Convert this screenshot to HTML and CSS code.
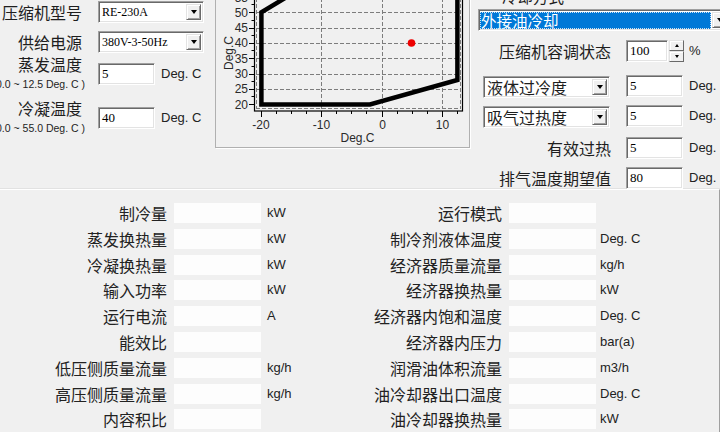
FILE: index.html
```html
<!DOCTYPE html>
<html>
<head>
<meta charset="utf-8">
<link rel="stylesheet" href="styles.css">
</head>
<body>
<div class="window">
  <div class="top">
    <div class="leftcol">
      <div class="row r1">
        <div class="lbl"><span class="cap">压缩机型号</span></div>
        <div class="combo w106"><span class="val serif">RE-230A</span><span class="dd"></span></div>
      </div>
      <div class="row r2">
        <div class="lbl"><span class="cap">供给电源</span></div>
        <div class="combo w106"><span class="val serif">380V-3-50Hz</span><span class="dd"></span></div>
      </div>
      <div class="row r3">
        <div class="lbl">
          <span class="cap">蒸发温度</span>
          <span class="range"><span>(-10.0 ~ 12.5 Deg. C )</span></span>
        </div>
        <div class="inp in3">5</div>
        <span class="unit in3">Deg. C</span>
      </div>
      <div class="row r4">
        <div class="lbl">
          <span class="cap">冷凝温度</span>
          <span class="range"><span>(20.0 ~ 55.0 Deg. C )</span></span>
        </div>
        <div class="inp in4">40</div>
        <span class="unit in4">Deg. C</span>
      </div>
    </div>

    <div class="chartpanel">
      <svg class="chart" width="253" height="156" viewBox="0 0 253 156">
        <g transform="translate(-216 9)">
          <g stroke="#7c7c7c" stroke-width="1" stroke-dasharray="4 2" fill="none">
            <line x1="256" y1="89.5" x2="461" y2="89.5"/>
            <line x1="256" y1="74.5" x2="461" y2="74.5"/>
            <line x1="256" y1="58.5" x2="461" y2="58.5"/>
            <line x1="256" y1="43.5" x2="461" y2="43.5"/>
            <line x1="256" y1="28.5" x2="461" y2="28.5"/>
            <line x1="256" y1="12.5" x2="461" y2="12.5"/>
            <line x1="256" y1="-2.5" x2="461" y2="-2.5"/>
            <line x1="321.5" y1="-20" x2="321.5" y2="109"/>
            <line x1="382.5" y1="-20" x2="382.5" y2="109"/>
            <line x1="442.5" y1="-20" x2="442.5" y2="109"/>
            <line x1="256.5" y1="-20" x2="256.5" y2="109"/>
            <line x1="256" y1="108.5" x2="461" y2="108.5"/>
            <line x1="460.5" y1="-20" x2="460.5" y2="109"/>
          </g>
          <rect x="254.5" y="-20" width="208" height="131" fill="none" stroke="#000" stroke-width="1.2"/>
          <g stroke="#000" stroke-width="1">
            <line x1="249" y1="104.5" x2="254" y2="104.5"/>
            <line x1="249" y1="89.5" x2="254" y2="89.5"/>
            <line x1="249" y1="74.5" x2="254" y2="74.5"/>
            <line x1="249" y1="58.5" x2="254" y2="58.5"/>
            <line x1="249" y1="43.5" x2="254" y2="43.5"/>
            <line x1="249" y1="28.5" x2="254" y2="28.5"/>
            <line x1="249" y1="12.5" x2="254" y2="12.5"/>
            <line x1="249" y1="-2.5" x2="254" y2="-2.5"/>
            <line x1="251.5" y1="96.5" x2="254" y2="96.5"/>
            <line x1="251.5" y1="81.5" x2="254" y2="81.5"/>
            <line x1="251.5" y1="66.5" x2="254" y2="66.5"/>
            <line x1="251.5" y1="50.5" x2="254" y2="50.5"/>
            <line x1="251.5" y1="35.5" x2="254" y2="35.5"/>
            <line x1="251.5" y1="20.5" x2="254" y2="20.5"/>
            <line x1="251.5" y1="4.5" x2="254" y2="4.5"/>
            <line x1="261.5" y1="111" x2="261.5" y2="117"/>
            <line x1="321.5" y1="111" x2="321.5" y2="117"/>
            <line x1="382.5" y1="111" x2="382.5" y2="117"/>
            <line x1="442.5" y1="111" x2="442.5" y2="117"/>
            <line x1="276.5" y1="111" x2="276.5" y2="114"/>
            <line x1="291.5" y1="111" x2="291.5" y2="114"/>
            <line x1="306.5" y1="111" x2="306.5" y2="114"/>
            <line x1="336.5" y1="111" x2="336.5" y2="114"/>
            <line x1="351.5" y1="111" x2="351.5" y2="114"/>
            <line x1="366.5" y1="111" x2="366.5" y2="114"/>
            <line x1="397.5" y1="111" x2="397.5" y2="114"/>
            <line x1="412.5" y1="111" x2="412.5" y2="114"/>
            <line x1="427.5" y1="111" x2="427.5" y2="114"/>
            <line x1="457.5" y1="111" x2="457.5" y2="114"/>
          </g>
          <polygon points="261.4,104.4 261.4,12.3 300,-11 320,-40 457.4,-40 457.4,80 370,104.4" fill="none" stroke="#000" stroke-width="4.5" stroke-linejoin="miter"/>
          <circle cx="411.5" cy="43" r="3.8" fill="#ee0000"/>
          <g class="ticklbl" text-anchor="end">
            <text x="248" y="1.5">55</text>
            <text x="248" y="16.6">50</text>
            <text x="248" y="32">45</text>
            <text x="248" y="47.3">40</text>
            <text x="248" y="62.7">35</text>
            <text x="248" y="78">30</text>
            <text x="248" y="93.4">25</text>
            <text x="248" y="108.7">20</text>
          </g>
          <g class="ticklbl" text-anchor="middle">
            <text x="261" y="128.5">-20</text>
            <text x="321.5" y="128.5">-10</text>
            <text x="382.5" y="128.5">0</text>
            <text x="442.5" y="128.5">10</text>
            <text x="357.5" y="141.5">Deg.C</text>
            <text transform="translate(232.5 53) rotate(-90)">Deg.C</text>
          </g>
        </g>
      </svg>
    </div>

    <div class="rightcol">
      <div class="cut">冷却方式</div>
      <div class="bluecombo">
        <div class="sel">外接油冷却</div>
        <span class="dd"></span>
      </div>
      <div class="rrow s1">
        <div class="rlbl">压缩机容调状态</div>
        <div class="inp w42">100</div>
        <div class="spin"><span class="sb up"></span><span class="sb down"></span></div>
        <span class="unit pct">%</span>
      </div>
      <div class="rrow s2">
        <div class="rcombo"><span class="cval">液体过冷度</span><span class="dd"></span></div>
        <div class="inp">5</div>
        <span class="unit">Deg. C</span>
      </div>
      <div class="rrow s3">
        <div class="rcombo"><span class="cval">吸气过热度</span><span class="dd"></span></div>
        <div class="inp">5</div>
        <span class="unit">Deg. C</span>
      </div>
      <div class="rrow s4">
        <div class="rlbl">有效过热</div>
        <div class="inp">5</div>
        <span class="unit">Deg. C</span>
      </div>
      <div class="rrow s5">
        <div class="rlbl">排气温度期望值</div>
        <div class="inp">80</div>
        <span class="unit">Deg. C</span>
      </div>
    </div>
  </div>

  <div class="results">
    <div class="rl">制冷量</div><div class="rf"></div><div class="ru">kW</div>
    <div class="rl">运行模式</div><div class="rf"></div><div class="ru r"></div>

    <div class="rl">蒸发换热量</div><div class="rf"></div><div class="ru">kW</div>
    <div class="rl">制冷剂液体温度</div><div class="rf"></div><div class="ru r">Deg. C</div>

    <div class="rl">冷凝换热量</div><div class="rf"></div><div class="ru">kW</div>
    <div class="rl">经济器质量流量</div><div class="rf"></div><div class="ru r">kg/h</div>

    <div class="rl">输入功率</div><div class="rf"></div><div class="ru">kW</div>
    <div class="rl">经济器换热量</div><div class="rf"></div><div class="ru r">kW</div>

    <div class="rl">运行电流</div><div class="rf"></div><div class="ru">A</div>
    <div class="rl">经济器内饱和温度</div><div class="rf"></div><div class="ru r">Deg. C</div>

    <div class="rl">能效比</div><div class="rf"></div><div class="ru"></div>
    <div class="rl">经济器内压力</div><div class="rf"></div><div class="ru r">bar(a)</div>

    <div class="rl">低压侧质量流量</div><div class="rf"></div><div class="ru">kg/h</div>
    <div class="rl">润滑油体积流量</div><div class="rf"></div><div class="ru r">m3/h</div>

    <div class="rl">高压侧质量流量</div><div class="rf"></div><div class="ru">kg/h</div>
    <div class="rl">油冷却器出口温度</div><div class="rf"></div><div class="ru r">Deg. C</div>

    <div class="rl">内容积比</div><div class="rf"></div><div class="ru"></div>
    <div class="rl">油冷却器换热量</div><div class="rf"></div><div class="ru r">kW</div>
  </div>
</div>
</body>
</html>
```

FILE: styles.css
```css
html, body {
  margin: 0;
  padding: 0;
}
body {
  background: #f0f0f0;
  color: #1e1e1e;
  font-family: "Noto Sans CJK SC", "Noto Sans", sans-serif;
  font-size: 16px;
  overflow: hidden;
}
.window {
  width: 720px;
  height: 432px;
  overflow: hidden;
  position: relative;
}
.top {
  display: flex;
  align-items: flex-start;
  height: 189px;
}

/* ---------- left column ---------- */
.leftcol {
  width: 215px;
  flex: none;
  display: flex;
  flex-direction: column;
}
.row {
  display: flex;
  align-items: flex-start;
}
.r1 { margin-top: 1px; }
.r2 { margin-top: 8px; }
.r3 { margin-top: 1px; }
.r4 { margin-top: 7px; }
.lbl {
  width: 85px;
  margin-right: 13px;
  flex: none;
  display: flex;
  flex-direction: column;
  align-items: flex-end;
}
.r1 .lbl, .r2 .lbl { margin-top: 1px; }
.cap {
  display: block;
  font-size: 16px;
  line-height: 20px;
  padding-right: 3px;
  white-space: nowrap;
}
.range {
  display: flex;
  justify-content: flex-end;
  width: 85px;
  margin-top: 3px;
  font-family: "Liberation Sans", Arial, sans-serif;
  font-size: 10.5px;
  line-height: 14px;
  white-space: nowrap;
}
.in3 { margin-top: 9px; }
.in4 { margin-top: 9px; }

.serif {
  font-family: "Liberation Serif", "Times New Roman", serif;
}

/* sunken field */
.combo, .inp, .rcombo, .bluecombo {
  box-sizing: border-box;
  height: 22px;
  background: #fff;
  border: 1px solid;
  border-color: #a0a0a0 #ffffff #ffffff #a0a0a0;
  box-shadow: inset 1px 1px 0 #696969, inset -1px -1px 0 #e3e3e3;
  display: flex;
  align-items: center;
  flex: none;
}
.w106 { width: 106px; }
.val {
  font-size: 12px;
  padding-left: 3px;
  color: #000;
}
.dd {
  margin-left: auto;
  margin-right: 2px;
  width: 15px;
  height: 16px;
  box-sizing: border-box;
  background: #f0f0f0;
  border: 1px solid;
  border-color: #e3e3e3 #696969 #696969 #e3e3e3;
  box-shadow: inset 1px 1px 0 #fff, inset -1px -1px 0 #a0a0a0;
  display: flex;
  align-items: center;
  justify-content: center;
  flex: none;
}
.dd::after {
  content: "";
  width: 0;
  height: 0;
  border-left: 3.5px solid transparent;
  border-right: 3.5px solid transparent;
  border-top: 4px solid #000;
}
.inp {
  width: 57px;
  padding-left: 3px;
  font-family: "Liberation Serif", "Times New Roman", serif;
  font-size: 13px;
  color: #000;
}
.w42 { width: 42px; }
.unit {
  font-family: "Liberation Sans", Arial, sans-serif;
  font-size: 13px;
  line-height: 22px;
  margin-left: 6px;
  white-space: nowrap;
  color: #222;
}

/* ---------- chart ---------- */
.chartpanel {
  width: 255px;
  height: 158px;
  margin-top: -10px;
  box-sizing: border-box;
  border: 1px solid #b0b0b0;
  box-shadow: 1px 1px 0 #ffffff;
  flex: none;
  overflow: hidden;
}
.chart {
  display: block;
}
.ticklbl text {
  font-family: "Liberation Sans", Arial, sans-serif;
  font-size: 12px;
  fill: #2a2a2a;
}

/* ---------- right column ---------- */
.rightcol {
  width: 250px;
  margin-left: 10px;
  flex: none;
  display: flex;
  flex-direction: column;
}
.cut {
  margin-top: -14px;
  height: 20px;
  line-height: 20px;
  padding-left: 22px;
  font-size: 15.5px;
  white-space: nowrap;
}
.bluecombo {
  margin-top: 3px;
  margin-left: -2px;
  width: 252px;
}
.sel {
  width: 231px;
  height: 17px;
  box-sizing: border-box;
  margin-left: 1px;
  background: #0078d7;
  color: #fff;
  outline: 1px dotted #cfe3f5;
  outline-offset: -1px;
  font-size: 15.5px;
  line-height: 17px;
  padding-left: 1px;
  white-space: nowrap;
}
.bluecombo .dd {
  margin-left: 1px;
}
.rrow {
  display: flex;
  align-items: center;
}
.s1 { margin-top: 9px; }
.s2 { margin-top: 12px; }
.s3 { margin-top: 6px; }
.s4 { margin-top: 9px; }
.s5 { margin-top: 8px; }
.rlbl {
  width: 132px;
  margin-right: 14px;
  text-align: right;
  padding-right: 1px;
  box-sizing: border-box;
  font-size: 16px;
  line-height: 22px;
  white-space: nowrap;
  flex: none;
}
.rcombo {
  width: 127px;
  margin-left: 3px;
  margin-right: 16px;
  margin-top: 2px;
}
.cval {
  font-size: 16px;
  line-height: 18px;
  padding-left: 3px;
  white-space: nowrap;
}
.spin {
  width: 15px;
  height: 22px;
  margin-left: 1px;
  display: flex;
  flex-direction: column;
  flex: none;
}
.sb {
  flex: 1;
  box-sizing: border-box;
  background: #f0f0f0;
  border: 1px solid;
  border-color: #e3e3e3 #696969 #696969 #e3e3e3;
  box-shadow: inset 1px 1px 0 #fff;
  display: flex;
  align-items: center;
  justify-content: center;
}
.sb.up::after {
  content: "";
  border-left: 2.5px solid transparent;
  border-right: 2.5px solid transparent;
  border-bottom: 3px solid #000;
}
.sb.down::after {
  content: "";
  border-left: 2.5px solid transparent;
  border-right: 2.5px solid transparent;
  border-top: 3px solid #000;
}
.pct { margin-left: 5px; }

/* ---------- results ---------- */
.results {
  margin-left: -2px;
  width: 722px;
  height: 250px;
  box-sizing: border-box;
  border-top: 1px solid #ffffff;
  border-right: 1px solid #a0a0a0;
  box-shadow: 0 -1px 0 #e2e2e2;
  padding-top: 13px;
  display: grid;
  grid-template-columns: 176px 87px 60px 188px 87px 1fr;
  grid-auto-rows: 20px;
  row-gap: 5.8px;
}
.rl {
  text-align: right;
  padding-right: 7px;
  font-size: 16px;
  line-height: 20px;
  white-space: nowrap;
  color: #222;
}
.rf {
  background: #fdfdfd;
}
.ru {
  font-family: "Liberation Sans", Arial, sans-serif;
  font-size: 13px;
  line-height: 20px;
  padding-left: 6px;
  white-space: nowrap;
  color: #222;
}
.ru.r {
  padding-left: 4px;
}
```
